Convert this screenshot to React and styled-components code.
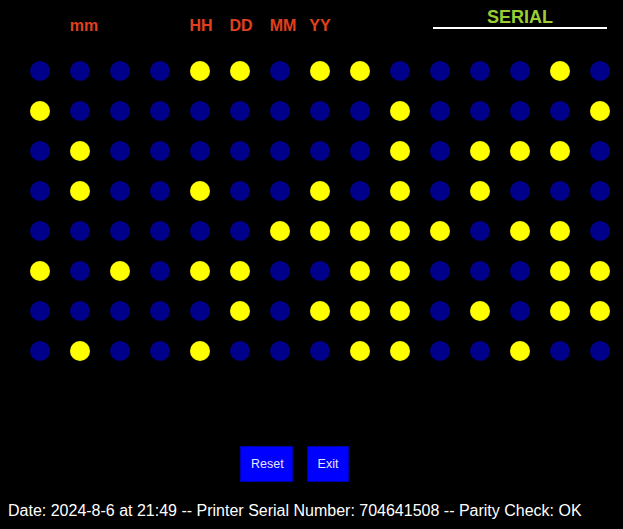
import React from 'react';
import styled, { createGlobalStyle } from 'styled-components';

const GlobalStyle = createGlobalStyle`
  html, body {
    margin: 0;
    padding: 0;
    background: #000;
  }
  body {
    font-family: "Liberation Sans", Arial, sans-serif;
    color: #fff;
  }
`;

const Page = styled.div`
  width: 623px;
  height: 529px;
  display: flex;
  flex-direction: column;
  overflow: hidden;
`;

const Header = styled.div`
  display: grid;
  grid-template-columns: repeat(15, 40px);
  align-items: start;
  padding: 7px 0 0 20px;
  height: 28px;
`;

const FieldLabel = styled.div`
  grid-column: ${p => p.$col};
  margin-top: 10px;
  padding-left: ${p => p.$nudge || 0}px;
  text-align: center;
  font-size: 16px;
  line-height: 18px;
  font-weight: bold;
  color: #e0401e;
`;

const SerialLabel = styled.div`
  grid-column: 11 / span 5;
  margin: 0 13px;
  text-align: center;
  font-size: 18px;
  line-height: 20px;
  font-weight: bold;
  color: #9acd32;
  border-bottom: 2px solid #fff;
`;

const Board = styled.div`
  display: grid;
  grid-template-columns: repeat(15, 20px);
  grid-auto-rows: 20px;
  column-gap: 20px;
  row-gap: 20px;
  padding-left: 30px;
  margin-top: 26px;
`;

const Dot = styled.span`
  width: 20px;
  height: 20px;
  border-radius: 50%;
  background: ${p => (p.$on ? '#ffff00' : '#00008b')};
`;

const Actions = styled.div`
  display: flex;
  gap: 14px;
  padding-left: 240px;
  margin-top: 85px;
`;

const Button = styled.button`
  height: 36px;
  padding: 0 ${p => p.$pad}px;
  border: 1px solid #0000b0;
  background: #0000ff;
  color: #e8e8ff;
  font-family: "Liberation Sans", Arial, sans-serif;
  font-size: 12.5px;
  cursor: pointer;
`;

const Status = styled.div`
  margin-top: 20px;
  padding-left: 8px;
  font-size: 16px;
  line-height: 18px;
  color: #fff;
  white-space: nowrap;
`;

const rows = [
  '000011011000010',
  '100000000100001',
  '010000000101110',
  '010010010101000',
  '000000111110110',
  '101011001100011',
  '000001011101011',
  '010010001100100',
];

export default function App() {
  return (
    <Page>
      <GlobalStyle />
      <Header>
        <FieldLabel $col={2} $nudge={8}>mm</FieldLabel>
        <FieldLabel $col={5} $nudge={2}>HH</FieldLabel>
        <FieldLabel $col={6} $nudge={2}>DD</FieldLabel>
        <FieldLabel $col={7} $nudge={6}>MM</FieldLabel>
        <FieldLabel $col={8}>YY</FieldLabel>
        <SerialLabel>SERIAL</SerialLabel>
      </Header>
      <Board>
        {rows.map((row, r) =>
          row.split('').map((bit, c) => <Dot key={`${r}-${c}`} $on={bit === '1'} />)
        )}
      </Board>
      <Actions>
        <Button $pad={10} style={{ width: 53 }}>Reset</Button>
        <Button $pad={8} style={{ width: 42 }}>Exit</Button>
      </Actions>
      <Status>
        Date: 2024-8-6 at 21:49 -- Printer Serial Number: 704641508 -- Parity Check: OK
      </Status>
    </Page>
  );
}
